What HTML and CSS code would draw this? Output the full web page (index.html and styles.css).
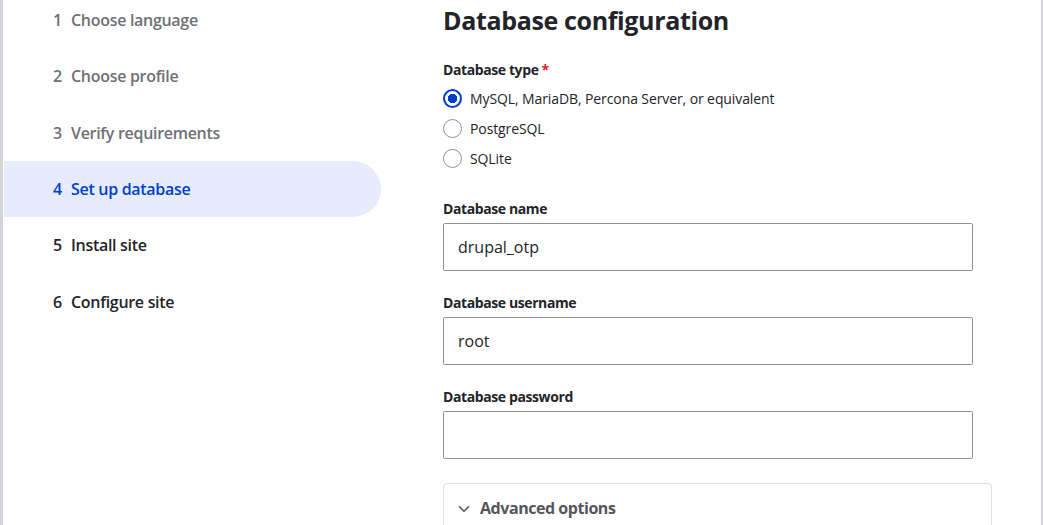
FILE: index.html
```html
<!DOCTYPE html>
<html lang="en">
<head>
<meta charset="utf-8">
<title>Set up database</title>
<link rel="stylesheet" href="styles.css">
</head>
<body>
<div class="page">
  <nav class="steps">
    <ol class="step-list">
      <li class="step done"><span class="num">1</span><span class="name">Choose language</span></li>
      <li class="step done"><span class="num">2</span><span class="name">Choose profile</span></li>
      <li class="step done"><span class="num">3</span><span class="name">Verify requirements</span></li>
      <li class="step active"><span class="num">4</span><span class="name">Set up database</span></li>
      <li class="step"><span class="num">5</span><span class="name">Install site</span></li>
      <li class="step"><span class="num">6</span><span class="name">Configure site</span></li>
    </ol>
  </nav>
  <main class="main">
    <h1 class="title">Database configuration</h1>
    <div class="field">
      <div class="label">Database type<span class="req">*</span></div>
      <div class="radios">
        <label class="radio"><span class="circle checked"></span><span>MySQL, MariaDB, Percona Server, or equivalent</span></label>
        <label class="radio"><span class="circle"></span><span>PostgreSQL</span></label>
        <label class="radio"><span class="circle"></span><span>SQLite</span></label>
      </div>
    </div>
    <div class="field text-field">
      <div class="label">Database name</div>
      <div class="input">drupal_otp</div>
    </div>
    <div class="field text-field">
      <div class="label">Database username</div>
      <div class="input">root</div>
    </div>
    <div class="field text-field">
      <div class="label">Database password</div>
      <div class="input"></div>
    </div>
    <div class="details">
      <div class="summary">
        <svg class="chev" width="12" height="8" viewBox="0 0 12 8"><path d="M1 1.2 L6 6.2 L11 1.2" fill="none" stroke="#55565b" stroke-width="1.5"/></svg>
        <span>Advanced options</span>
      </div>
    </div>
  </main>
</div>
</body>
</html>
```
FILE: styles.css
```css
html, body {
  margin: 0;
  padding: 0;
  background: #ffffff;
  height: 100%;
  overflow: hidden;
}
body {
  font-family: "Open Sans", "Noto Sans", sans-serif;
  color: #232429;
}
.page {
  display: flex;
  height: 525px;
  border-left: 3px solid #d4d4da;
  border-right: 2px solid #d4d4da;
  box-sizing: border-box;
}
.steps {
  width: 377px;
  padding-left: 1px;
  flex: none;
}
.step-list {
  list-style: none;
  margin: -8px 0 0 0;
  padding: 0;
}
.step {
  height: 56.33px;
  display: flex;
  align-items: center;
  padding-left: 49px;
  font-size: 16px;
  font-weight: 600;
  letter-spacing: -0.3px;
  color: #232429;
  border-radius: 0 29px 29px 0;
}
.step .num {
  width: 18px;
  flex: none;
}
.step.done {
  color: #6f7076;
}
.step.active {
  background: #e6ecfc;
  color: #003ecc;
}
.main {
  flex: none;
  margin-left: 62px;
  width: 550px;
  padding-top: 4px;
}
.title {
  margin: 0 0 25px 0;
  font-size: 25px;
  line-height: 32px;
  font-weight: 700;
  letter-spacing: -0.35px;
  color: #232429;
}
.label {
  font-size: 14px;
  line-height: 18px;
  font-weight: 700;
  letter-spacing: -0.4px;
  color: #232429;
}
.req {
  color: #dc2323;
  margin-left: 3px;
}
.radios {
  margin-top: 4px;
  display: flex;
  flex-direction: column;
}
.radio {
  height: 30px;
  display: flex;
  align-items: center;
  font-size: 14px;
  letter-spacing: -0.1px;
  color: #232429;
}
.circle {
  width: 19px;
  height: 19px;
  box-sizing: border-box;
  border: 1px solid #8e929c;
  border-radius: 50%;
  margin-right: 8px;
  flex: none;
}
.circle.checked {
  border: 2px solid #003ecc;
  background: radial-gradient(circle, #003ecc 0 4.5px, #ffffff 5px);
}
.text-field {
  margin-top: 27px;
}
.text-field + .text-field {
  margin-top: 23px;
}
.text-field .label {
  margin-bottom: 5px;
}
.input {
  width: 530px;
  height: 48px;
  box-sizing: border-box;
  border: 1px solid #8e929c;
  border-radius: 2px;
  padding: 0 14px;
  display: flex;
  align-items: center;
  font-size: 16px;
  color: #232429;
}
.details {
  margin-top: 24px;
  width: 549px;
  height: 60px;
  box-sizing: border-box;
  border: 1px solid #dedfe4;
  border-radius: 4px 4px 0 0;
}
.summary {
  display: flex;
  align-items: center;
  height: 48px;
  padding-left: 14px;
  font-size: 16px;
  font-weight: 700;
  letter-spacing: -0.45px;
  color: #55565b;
}
.chev {
  margin-right: 10px;
  margin-top: 1px;
}
```
